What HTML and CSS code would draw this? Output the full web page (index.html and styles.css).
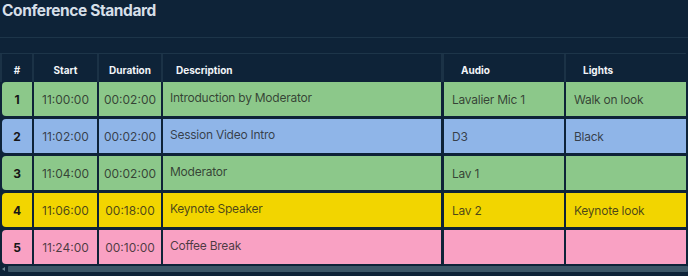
FILE: index.html
```html
<!DOCTYPE html>
<html lang="en">
<head>
<meta charset="utf-8">
<title>Conference Standard</title>
<link rel="stylesheet" href="styles.css">
</head>
<body>
<div class="page">
  <h1 class="title">Conference Standard</h1>
  <div class="toolbar"></div>
  <div class="sheet">
    <div class="row head">
      <div class="cell num">#</div>
      <div class="cell ctr">Start</div>
      <div class="cell ctr">Duration</div>
      <div class="cell desc">Description</div>
      <div class="cell side">Audio</div>
      <div class="cell side">Lights</div>
    </div>
    <div class="rows">
      <div class="row green">
        <div class="cell num">1</div>
        <div class="cell ctr">11:00:00</div>
        <div class="cell ctr">00:02:00</div>
        <div class="cell desc">Introduction by Moderator</div>
        <div class="cell side">Lavalier Mic 1</div>
        <div class="cell side">Walk on look</div>
      </div>
      <div class="row blue">
        <div class="cell num">2</div>
        <div class="cell ctr">11:02:00</div>
        <div class="cell ctr">00:02:00</div>
        <div class="cell desc">Session Video Intro</div>
        <div class="cell side">D3</div>
        <div class="cell side">Black</div>
      </div>
      <div class="row green">
        <div class="cell num">3</div>
        <div class="cell ctr">11:04:00</div>
        <div class="cell ctr">00:02:00</div>
        <div class="cell desc">Moderator</div>
        <div class="cell side">Lav 1</div>
        <div class="cell side"></div>
      </div>
      <div class="row yellow">
        <div class="cell num">4</div>
        <div class="cell ctr">11:06:00</div>
        <div class="cell ctr">00:18:00</div>
        <div class="cell desc">Keynote Speaker</div>
        <div class="cell side">Lav 2</div>
        <div class="cell side">Keynote look</div>
      </div>
      <div class="row pink">
        <div class="cell num">5</div>
        <div class="cell ctr">11:24:00</div>
        <div class="cell ctr">00:10:00</div>
        <div class="cell desc">Coffee Break</div>
        <div class="cell side"></div>
        <div class="cell side"></div>
      </div>
    </div>
  </div>
  <div class="scrollbar">
    <span class="arrow"></span>
    <span class="track"></span>
  </div>
</div>
</body>
</html>
```
FILE: styles.css
```css
html, body {
  margin: 0;
  padding: 0;
  background: #0e2338;
}
body {
  font-family: Inter, "Liberation Sans", Arial, sans-serif;
  width: 688px;
  height: 276px;
  overflow: hidden;
}
.page {
  display: flex;
  flex-direction: column;
}
.title {
  margin: 0;
  padding-left: 2px;
  font-size: 15.5px;
  line-height: 22px;
  font-weight: 700;
  color: #d6dfe8;
  letter-spacing: -0.4px;
}
.toolbar {
  height: 15px;
  border-bottom: 1px solid #1d3549;
}
.sheet {
  margin-top: 15px;
  display: flex;
  flex-direction: column;
}
.row {
  display: grid;
  grid-template-columns: 30px 63px 62px 279px 120px 120px;
  column-gap: 2px;
  padding-left: 2px;
  width: 686px;
}
.row.head {
  height: 29px;
  box-sizing: border-box;
  border-top: 1px solid #1d3549;
  border-right: 1px solid #1b3246;
  background: #1b3246;
}
.head .cell {
  background: #0e2338;
  color: #f2f5f8;
  font-size: 10px;
  font-weight: 700;
  padding-top: 3px;
}
.head .side {
  padding-left: 17px;
}
.head .desc {
  padding-left: 13px;
}
.rows {
  display: flex;
  flex-direction: column;
  gap: 3px;
}
.cell {
  display: flex;
  align-items: center;
  min-width: 0;
  white-space: nowrap;
  overflow: hidden;
}
.rows .row {
  height: 34px;
}
.rows .cell {
  font-size: 12px;
  color: rgba(30, 30, 30, 0.8);
}
.rows .desc,
.rows .side {
  letter-spacing: -0.25px;
}
.num {
  justify-content: center;
}
.rows .num {
  font-weight: 700;
  color: #161616;
  border-radius: 4px 0 0 4px;
}
.ctr {
  justify-content: center;
}
.desc {
  padding-left: 7px;
  margin-right: 1px;
}
.rows .desc {
  padding-bottom: 4px;
  box-sizing: border-box;
}
.side {
  padding-left: 8px;
}
.green .cell { background: #8cc88a; }
.blue .cell { background: #8fb5e8; }
.yellow .cell { background: #f2d500; }
.pink .cell { background: #f9a1c3; }
.scrollbar {
  margin-top: 2px;
  height: 6px;
  display: flex;
  align-items: center;
}
.arrow {
  width: 0;
  height: 0;
  margin: 0 3px 0 2px;
  border-top: 2px solid transparent;
  border-bottom: 2px solid transparent;
  border-right: 3px solid #6f8796;
}
.track {
  flex: 1;
  height: 6px;
  background: #3c5667;
  border-radius: 1px;
}
```
